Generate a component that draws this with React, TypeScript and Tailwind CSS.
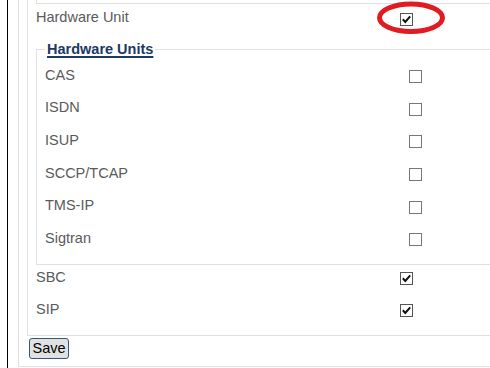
import React from "react";

function Box({ checked, nudge }: { checked?: boolean; nudge: string }) {
  return (
    <span
      className={`inline-flex items-center justify-center w-[13px] h-[13px] bg-white border ${
        checked ? "border-[#555555]" : "border-[#777777]"
      } ${nudge}`}
    >
      {checked && (
        <svg width="11" height="11" viewBox="0 0 11 11">
          <polyline
            points="1.8,5.2 4.3,7.9 9.2,2.4"
            fill="none"
            stroke="#111111"
            strokeWidth="2"
          />
        </svg>
      )}
    </span>
  );
}

function Row({
  label,
  h,
  checked,
  nudge,
}: {
  label: string;
  h: string;
  checked?: boolean;
  nudge: string;
}) {
  return (
    <div className={`flex items-center ${h}`}>
      <span className="w-[364px] leading-[17px] text-[#5a5a5a]">{label}</span>
      <Box checked={checked} nudge={nudge} />
    </div>
  );
}

export default function App() {
  const units = ["CAS", "ISDN", "ISUP", "SCCP/TCAP", "TMS-IP", "Sigtran"];
  return (
    <div className="relative w-[490px] h-[368px] overflow-hidden bg-white font-['Liberation_Sans',Arial,sans-serif] text-[14.5px]">
      <div className="ml-[7px] h-full border-l border-black">
        <div className="ml-[10px] w-[700px] border-l border-b border-[#e0e0e0]">
          <div className="ml-[8px] border-l border-b border-[#e0e0e0] pl-[8px] pb-[6px]">
            <div className="h-[4px] border-l border-b border-[#e0e0e0]" />
            <Row label="Hardware Unit" h="h-[26px]" checked nudge="mt-[4px]" />
            <fieldset className="mt-[11px] border border-[#e0e0e0] pl-[8px] pt-[1px] pb-[9.4px]">
              <legend className="ml-0 px-[2px] font-bold leading-[17px] text-[#203864] underline decoration-2 underline-offset-[2px]">
                Hardware Units
              </legend>
              {units.map((u) => (
                <Row key={u} label={u} h="h-[32.6px]" nudge="mt-[3px]" />
              ))}
            </fieldset>
            <Row label="SBC" h="h-[26px]" checked nudge="mt-[2px]" />
            <Row label="SIP" h="h-[38px]" checked nudge="mt-[1px]" />
          </div>
          <button className="ml-[10px] mt-[2px] mb-[7px] block h-[21px] w-[40px] rounded-[3px] border border-[#35587e] bg-[#e1e1e1] text-[14.5px] leading-none text-black">
            Save
          </button>
        </div>
      </div>
      <svg
        className="absolute left-0 top-0 pointer-events-none"
        width="490"
        height="368"
      >
        <ellipse
          cx="411"
          cy="17.8"
          rx="31.5"
          ry="13.8"
          fill="none"
          stroke="#e01b22"
          strokeWidth="5"
        />
      </svg>
    </div>
  );
}
